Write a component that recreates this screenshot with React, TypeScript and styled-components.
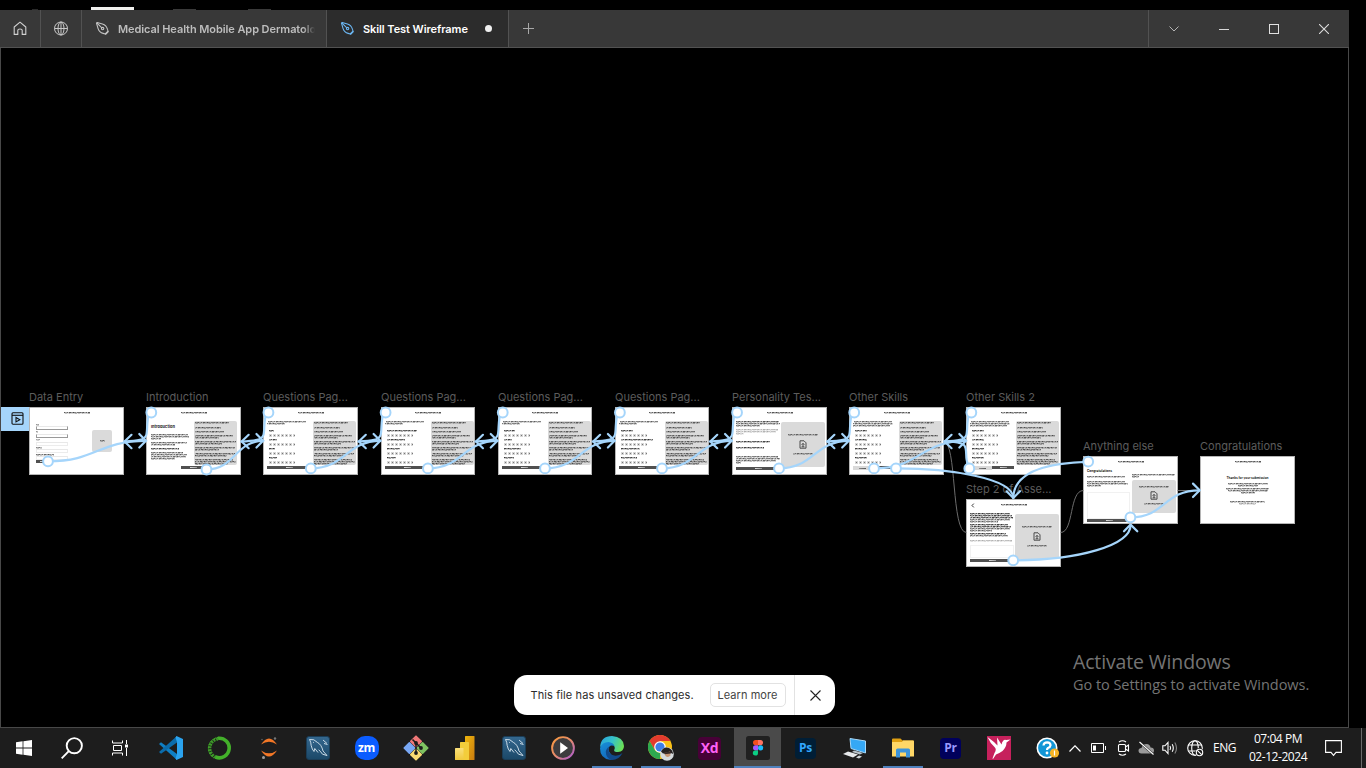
import React from "react";
import styled, { createGlobalStyle, css } from "styled-components";

const BLUE = "#a5d5fb";

const Global = createGlobalStyle`
  * { box-sizing: border-box; }
  html, body { margin: 0; background: #000; overflow: hidden; }
  body { font-family: Inter, "Liberation Sans", sans-serif; }
  svg { display: block; }
`;

const Screen = styled.div`
  width: 1366px;
  height: 768px;
  display: flex;
  flex-direction: column;
  background: #000;
`;

/* ---------- strip of the window behind ---------- */
const BackStrip = styled.div`
  height: 10px;
  flex: none;
  display: flex;
  align-items: flex-end;
`;
const Peek = styled.div<{ $gap: number; $w: number; $h: number; $c: string }>`
  margin-left: ${(p) => p.$gap}px;
  width: ${(p) => p.$w}px;
  height: ${(p) => p.$h}px;
  background: ${(p) => p.$c};
`;

/* ---------- app window ---------- */
const Window = styled.div`
  width: 1349px;
  height: 718px;
  flex: none;
  display: flex;
  flex-direction: column;
`;
const TabBar = styled.div`
  height: 38px;
  flex: none;
  display: flex;
  background: #383838;
  border-bottom: 1px solid #525252;
`;
const IconCell = styled.div<{ $w: number; $line?: boolean }>`
  width: ${(p) => p.$w}px;
  display: flex;
  align-items: center;
  justify-content: center;
  ${(p) => p.$line && css`border-right: 1px solid #525252;`}
`;
const Tab = styled.div<{ $w: number; $active?: boolean }>`
  width: ${(p) => p.$w}px;
  display: flex;
  align-items: center;
  padding-left: 13px;
  border-right: 1px solid #525252;
  background: ${(p) => (p.$active ? "#2c2c2c" : "#383838")};
  color: ${(p) => (p.$active ? "#fff" : "#bdbdbd")};
`;
const TabTitle = styled.div<{ $w: number; $fade?: boolean }>`
  margin-left: 8px;
  width: ${(p) => p.$w}px;
  overflow: hidden;
  white-space: nowrap;
  font-size: 11px;
  line-height: 16px;
  font-weight: 600;
  letter-spacing: -0.08px;
  ${(p) => p.$fade && css`mask-image: linear-gradient(90deg, #000 94%, transparent);`}
`;
const Dirty = styled.div`
  width: 7px;
  height: 7px;
  margin-left: 15.5px;
  border-radius: 50%;
  background: #f0f0f0;
`;
const Controls = styled.div`
  margin-left: auto;
  display: flex;
  border-left: 1px solid #525252;
`;
const Canvas = styled.div`
  position: relative;
  flex: 1;
  border: 1px solid #484848;
  border-top: 0;
  display: flex;
  align-items: flex-end;
  justify-content: center;
`;

/* ---------- frames on the canvas ---------- */
const FrameNode = styled.div<{ $x: number; $y: number; $w: number }>`
  position: absolute;
  left: ${(p) => p.$x - 1}px;
  top: ${(p) => p.$y - 48}px;
  width: ${(p) => p.$w}px;
`;
const FrameLabel = styled.div`
  position: absolute;
  left: 0;
  bottom: 100%;
  height: 18px;
  line-height: 16px;
  font-size: 11px;
  letter-spacing: 0;
  color: #5c5c5c;
  white-space: nowrap;
`;
const Page = styled.div`
  height: 68px;
  background: #fff;
  border: 1px solid #b5b5b5;
  display: flex;
  flex-direction: column;
  overflow: hidden;
`;
const PageHead = styled.div`
  position: relative;
  height: 13px;
  flex: none;
  padding-top: 4px;
  display: flex;
  justify-content: center;
`;
const BackArrow = styled.svg`
  position: absolute;
  left: 4px;
  top: 3px;
`;
const PageBody = styled.div`
  flex: 1;
  display: flex;
`;
const Column = styled.div<{ $w: number; $pl?: number; $center?: boolean }>`
  width: ${(p) => p.$w}px;
  padding-left: ${(p) => p.$pl ?? 0}px;
  display: flex;
  flex-direction: column;
  align-items: ${(p) => (p.$center ? "center" : "flex-start")};
`;
const Greek = styled.div<{ $w: number; $mt?: number; $ml?: number; $tone?: number; $shift?: number }>`
  flex: none;
  width: ${(p) => p.$w}px;
  height: 2px;
  margin-top: ${(p) => p.$mt ?? 0}px;
  margin-left: ${(p) => p.$ml ?? 0}px;
  opacity: ${(p) => p.$tone ?? 0.8};
  background:
    repeating-linear-gradient(90deg, #555 0 1px, #888 1px 2px, #666 2px 3px, #444 3px 4px, #999 4px 6px, #555 6px 7px, rgba(0,0,0,.25) 7px 8px, #444 8px 10px, #888 10px 12px, #333 12px 13px, #777 13px 15px, rgba(0,0,0,.3) 15px 16px, #666 16px 19px)
      ${(p) => -(p.$shift ?? 0)}px 0 / 200px 1px no-repeat,
    repeating-linear-gradient(90deg, rgba(0,0,0,.2) 0 1px, rgba(0,0,0,.34) 1px 3px, rgba(0,0,0,.08) 3px 4px, rgba(0,0,0,.26) 4px 6px, rgba(0,0,0,.12) 6px 8px, rgba(0,0,0,.3) 8px 9px, rgba(0,0,0,.18) 9px 13px)
      ${(p) => -(p.$shift ?? 0)}px 1px / 200px 1px no-repeat;
`;
const Panel = styled.div<{ $w: number; $h: number; $mt?: number; $center?: boolean }>`
  width: ${(p) => p.$w}px;
  height: ${(p) => p.$h}px;
  margin-top: ${(p) => p.$mt ?? 0}px;
  padding-left: ${(p) => (p.$center ? 0 : 1)}px;
  border-radius: 2px;
  background: #dadada;
  display: flex;
  flex-direction: column;
  align-items: ${(p) => (p.$center ? "center" : "flex-start")};
`;
const Chips = styled.div`
  flex: none;
  height: 3px;
  width: 26px;
  margin: 2px 0 1px 2px;
  background:
    repeating-linear-gradient(90deg, transparent 0 1px, #777 1px 2px, transparent 2px 4px) 0 1px / 100% 1px no-repeat,
    repeating-linear-gradient(90deg, #d6d6d6 0 3px, #fff 3px 4px);
`;
const Bar = styled.div<{ $w: number; $light?: boolean; $ml?: number }>`
  flex: none;
  width: ${(p) => p.$w}px;
  height: ${(p) => (p.$light ? 4 : 3)}px;
  margin-left: ${(p) => p.$ml ?? 0}px;
  background:
    linear-gradient(90deg, ${(p) => (p.$light ? "#888, #555" : "#ddd, #999")}) center / 7px 1px no-repeat,
    ${(p) => (p.$light ? "#d9d9d9" : "#505050")};
`;
const PageFoot = styled.div<{ $pl: number }>`
  height: 8px;
  flex: none;
  display: flex;
  padding-left: ${(p) => p.$pl}px;
`;
const Gap = styled.div<{ $h: number }>`
  flex: none;
  height: ${(p) => p.$h}px;
`;
const MiniTitle = styled.div<{ $size: number; $up?: number }>`
  flex: none;
  font-size: ${(p) => p.$size}px;
  line-height: 6px;
  height: 6px;
  margin-top: ${(p) => -(p.$up ?? 0)}px;
  font-weight: 700;
  color: #222;
  white-space: nowrap;
`;
const Field = styled.div<{ $c: string; $mt: number }>`
  flex: none;
  width: 32px;
  height: 4px;
  margin-top: ${(p) => p.$mt}px;
  border: 1px solid ${(p) => p.$c};
  border-top-color: #e8e8e8;
`;
const Area = styled.div<{ $w: number; $h: number; $mt: number }>`
  flex: none;
  width: ${(p) => p.$w}px;
  height: ${(p) => p.$h}px;
  margin-top: ${(p) => p.$mt}px;
  border: 1px solid #f1f1f1;
`;
const StartBadge = styled.div`
  position: absolute;
  left: 0;
  top: 359px;
  width: 28px;
  height: 24px;
  padding-left: 4px;
  padding-bottom: 1px;
  background: ${BLUE};
  display: flex;
  align-items: center;
  justify-content: center;
`;
const Wires = styled.svg`
  position: absolute;
  left: -1px;
  top: 0;
`;

/* ---------- toast ---------- */
const Toast = styled.div`
  position: relative;
  width: 321px;
  height: 40px;
  margin: 0 1px 12px 0;
  border-radius: 13px;
  background: #fff;
  display: flex;
  align-items: center;
  padding-left: 17px;
  font-size: 11px;
  color: #2b2b2b;
`;
const ToastText = styled.div`
  width: 179px;
  letter-spacing: 0.1px;
  white-space: nowrap;
`;
const ToastButton = styled.div`
  width: 76px;
  height: 24px;
  border: 1px solid #e2e2e2;
  border-radius: 5px;
  display: flex;
  align-items: center;
  justify-content: center;
  letter-spacing: 0.05px;
  color: #444;
  white-space: nowrap;
`;
const ToastClose = styled.div`
  margin-left: 8px;
  width: 41px;
  height: 40px;
  padding-left: 1px;
  border-left: 1px solid #e2e2e2;
  display: flex;
  align-items: center;
  justify-content: center;
`;

/* ---------- watermark ---------- */
const Watermark = styled.div`
  position: absolute;
  left: 1072px;
  top: 600px;
  color: #747474;
  font-family: "Open Sans", "Noto Sans", sans-serif;
  white-space: nowrap;
`;
const MarkTitle = styled.div`
  font-size: 19.5px;
  line-height: 27px;
  letter-spacing: -0.15px;
`;
const MarkText = styled.div`
  font-size: 14.5px;
  line-height: 20px;
  letter-spacing: -0.04px;
`;

/* ---------- taskbar ---------- */
const Taskbar = styled.div`
  height: 40px;
  flex: none;
  display: flex;
  background: #1d1d1d;
  color: #fff;
`;
const SystemButton = styled.div`
  width: 48px;
  display: flex;
  align-items: center;
  justify-content: center;
`;
const Apps = styled.div`
  width: 875px;
  margin-left: 3px;
  display: flex;
`;
const AppButton = styled.div<{ $open?: boolean; $active?: boolean }>`
  flex: none;
  width: 47px;
  margin-right: 2px;
  &:nth-child(n + 12) {
    margin-right: 1px;
  }
  &:nth-child(14) {
    margin-right: 2px;
  }
  display: flex;
  align-items: center;
  justify-content: center;
  background:
    ${(p) => (p.$open || p.$active ? "linear-gradient(#4f81bd, #4f81bd)" : "none")} center bottom /
      ${(p) => (p.$active ? "100%" : "40px")} 2px no-repeat,
    ${(p) => (p.$active ? "#4a4a4a" : "transparent")};
`;
const Tile = styled.div<{ $bg: string; $c: string; $s: number; $r?: string; $f?: number }>`
  width: ${(p) => p.$s}px;
  height: ${(p) => p.$s}px;
  border-radius: ${(p) => p.$r ?? "4px"};
  background: ${(p) => p.$bg};
  color: ${(p) => p.$c};
  display: flex;
  align-items: center;
  justify-content: center;
  font: 700 ${(p) => p.$f ?? 12}px/1 "Open Sans", sans-serif;
  letter-spacing: -0.3px;
`;
const Tray = styled.div`
  margin-left: 11px;
  display: flex;
  align-items: center;
  font: 12px/18px "Open Sans", "Noto Sans", sans-serif;
`;
const TrayItem = styled.div<{ $w: number }>`
  width: ${(p) => p.$w}px;
  display: flex;
  justify-content: center;
  align-items: center;
  letter-spacing: -0.4px;
`;
const Clock = styled.div`
  width: 74px;
  padding-bottom: 1px;
  text-align: center;
  letter-spacing: -0.45px;
  white-space: nowrap;
`;
const DesktopEdge = styled.div`
  margin-left: auto;
  width: 5px;
  border-left: 1px solid #6a6a6a;
`;

/* ---------- icons ---------- */
const Pen = ({ color }: { color: string }) => (
  <svg width="15" height="15" viewBox="0 0 15 15" fill="none" stroke={color} strokeWidth="1.1" strokeLinejoin="round">
    <path d="M1.5 2.2 L3 7.4 Q4.2 11.4 8.2 12.4 L10.2 13 L13 10.2 L12.4 8.2 Q11.4 4.2 7.4 3 L2.2 1.5 Z" />
    <path d="M1.8 1.8 L6.8 6.8 M10.4 13.6 L13.6 10.4" />
    <circle cx="7.6" cy="7.6" r="1.2" />
  </svg>
);
const Home = () => (
  <svg width="14" height="15" viewBox="0 0 14 15" fill="none" stroke="#d0d0d0" strokeWidth="1.1" strokeLinejoin="round">
    <path d="M1.2 6 L7 1.2 L12.8 6 V13.4 H9.2 V9.2 Q9.2 8 7 8 Q4.8 8 4.8 9.2 V13.4 H1.2 Z" />
  </svg>
);
const Globe = () => (
  <svg width="15" height="15" viewBox="0 0 15 15" fill="none" stroke="#c8c8c8">
    <circle cx="7" cy="7.5" r="6.5" />
    <ellipse cx="7" cy="7.5" rx="3" ry="6.5" />
    <path d="M.5 7.5 H13.5 M7 1 V14" />
  </svg>
);
const FileGlyph = () => (
  <svg width="8" height="9" viewBox="0 0 8 9" fill="none" stroke="#3c3c3c" strokeWidth="0.9">
    <path d="M1 .8 H5 L7 2.8 V8.2 H1 Z M4 3.4 V6.6 M2.6 4.8 L4 3.4 L5.4 4.8 M2.6 6.8 H5.4" />
  </svg>
);
const Dolphin = () => (
  <svg width="24" height="24" viewBox="0 0 24 24">
    <defs>
      <linearGradient id="sea" x1="0" y1="0" x2="0" y2="1">
        <stop offset="0" stopColor="#35688f" />
        <stop offset="1" stopColor="#1b4868" />
      </linearGradient>
    </defs>
    <rect x=".5" y=".5" width="23" height="23" rx="2.5" fill="url(#sea)" stroke="#1a3d57" />
    <path
      d="M3.5 3.5 Q8 2.5 11.5 6.5 Q15.5 8.5 17 15 L21 19.5 L16.5 18.2 Q14 14.5 12.6 13.8 M3.5 3.5 Q5 6 5.2 9.5 Q6 13.5 8 15.5 L8.8 12.5 L12 16.5 M7.2 6.2 l.8.6 M17 4 L21 7.5 M18 7.5 L21.5 8.5"
      fill="none"
      stroke="#dbe8f0"
      strokeWidth=".9"
    />
  </svg>
);

/* ---------- page miniatures ---------- */
const panelLines = [
  [34, 1], [26, 3], [29, 2], [38, 2], [24, 0], [41, 2], [27, 0], [40, 2], [24, 0], [40, 2], [32, 0], [38, 2], [41, 0], [33, 0],
];
const InfoPanel = () => (
  <Panel $w={43} $h={44}>
    {panelLines.map(([w, mt], i) => (
      <Greek key={i} $w={w} $mt={mt} $shift={i * 5} $tone={0.85} />
    ))}
  </Panel>
);
const Head = ({ back }: { back?: boolean }) => (
  <PageHead>
    {back && (
      <BackArrow width="4" height="5" fill="none" stroke="#222" strokeWidth="0.9">
        <path d="M2.8 .6 L1 2.5 L2.8 4.4" />
      </BackArrow>
    )}
    <Greek $w={26} $shift={3} $tone={0.9} />
  </PageHead>
);
const UploadPanel = ({ h, mt = 0, w = 44 }: { h: number; mt?: number; w?: number }) => (
  <Panel $w={w} $h={h} $mt={mt} $center>
    <Greek $w={30} $mt={h > 40 ? 12 : 6} />
    <Gap $h={h > 40 ? 4 : 3} />
    <FileGlyph />
    <Greek $w={20} $mt={h > 40 ? 4 : 3} $shift={4} />
  </Panel>
);
const Questions = ({ labels, split }: { labels: number[]; split?: number }) => (
  <Page>
    <Head />
    <PageBody>
      <Column $w={49} $pl={3}>
        <Greek $w={38} $ml={1} $tone={0.8} />
        <Greek $w={split ? 40 : 18} $shift={6} $tone={0.8} />
        {split ? <Greek $w={37} $shift={2} $tone={0.8} /> : <Gap $h={2} />}
        {labels.map((w, i) => (
          <React.Fragment key={i}>
            <Greek $w={w} $ml={2} $mt={i ? 1 : 3} $shift={i * 4} $tone={1} />
            <Chips />
          </React.Fragment>
        ))}
      </Column>
      <InfoPanel />
    </PageBody>
    <PageFoot $pl={split ?? 3}>
      {split ? (
        <>
          <Bar $w={19} $light />
          <Bar $w={22} $ml={split > 4 ? 0 : 6} />
        </>
      ) : (
        <Bar $w={44} />
      )}
    </PageFoot>
  </Page>
);
const DataEntry = () => (
  <Page>
    <Head />
    <PageBody>
      <Column $w={62} $pl={6}>
        <Greek $w={3} $mt={3} $tone={0.6} />
        <Field $c="#999" $mt={0} />
        <Greek $w={2} $mt={1} $tone={0.6} />
        <Field $c="#999" $mt={1} />
        <Greek $w={4} $mt={1} $tone={0.5} />
        <Field $c="#ececec" $mt={1} />
        <Greek $w={6} $mt={1} $tone={0.7} />
        <Field $c="#ececec" $mt={0} />
        <Greek $w={18} $mt={1} $tone={0.8} />
        <Field $c="#eee" $mt={0} />
        <Bar $w={14} />
      </Column>
      <Panel $w={20} $h={22} $mt={9} $center>
        <Greek $w={5} $mt={10} />
      </Panel>
    </PageBody>
  </Page>
);
const Introduction = () => (
  <Page>
    <Head />
    <PageBody>
      <Column $w={47} $pl={4}>
        <Gap $h={3} />
        <MiniTitle $size={4}>Introduction</MiniTitle>
        <Greek $w={37} $mt={4} />
        <Greek $w={38} $shift={3} />
        <Greek $w={10} />
        <Greek $w={36} $mt={2} />
        <Greek $w={24} $shift={5} />
        <Greek $w={28} $mt={2} $tone={1} />
        <Greek $w={32} $mt={2} />
        <Greek $w={36} $shift={2} />
        <Greek $w={35} $shift={5} />
        <Greek $w={24} />
      </Column>
      <InfoPanel />
    </PageBody>
    <PageFoot $pl={34}>
      <Bar $w={25} />
    </PageFoot>
  </Page>
);
const Personality = () => (
  <Page>
    <Head />
    <PageBody>
      <Column $w={48} $pl={3}>
        <Greek $w={43} $tone={0.9} />
        <Greek $w={44} $shift={3} />
        <Greek $w={24} />
        <Greek $w={42} $mt={2} $tone={0.4} />
        <Greek $w={40} $tone={0.4} />
        <Greek $w={8} $tone={0.4} />
        <Greek $w={34} $mt={6} $tone={1} />
        <Greek $w={28} $mt={4} $tone={1} />
        <Greek $w={42} $mt={7} />
        <Greek $w={44} $shift={5} />
        <Greek $w={40} />
        <Greek $w={5} />
      </Column>
      <UploadPanel h={45} mt={1} />
    </PageBody>
    <PageFoot $pl={3}>
      <Bar $w={44} />
    </PageFoot>
  </Page>
);
const StepTwo = () => (
  <Page>
    <Head back />
    <PageBody>
      <Column $w={48} $pl={3}>
        <Greek $w={40} $tone={1} />
        <Greek $w={42} $shift={3} $tone={1} />
        <Greek $w={43} $shift={5} $tone={1} />
        <Greek $w={40} />
        <Greek $w={28} />
        <Greek $w={38} $mt={1} $tone={1} />
        <Greek $w={41} $shift={4} $tone={1} />
        <Greek $w={40} />
        <Greek $w={22} />
        <Greek $w={36} $mt={1} $tone={1} />
        <Greek $w={38} $shift={2} />
        <Greek $w={42} $mt={3} $tone={0.4} />
        <Area $w={44} $h={13} $mt={3} />
      </Column>
      <UploadPanel h={45} mt={1} />
    </PageBody>
    <PageFoot $pl={3}>
      <Bar $w={44} />
    </PageFoot>
  </Page>
);
const Anything = () => (
  <Page>
    <Head />
    <PageBody>
      <Column $w={48} $pl={3}>
        <MiniTitle $size={3.2} $up={2}>Congratulations</MiniTitle>
        <Greek $w={38} $mt={2} />
        <Greek $w={38} $mt={3} />
        <Greek $w={41} $shift={3} />
        <Greek $w={14} />
        <Area $w={43} $h={27} $mt={5} />
      </Column>
      <Column $w={44}>
        <Greek $w={43} $mt={4} />
        <Greek $w={7} />
        <UploadPanel h={33} mt={2} />
      </Column>
    </PageBody>
    <PageFoot $pl={3}>
      <Bar $w={44} />
    </PageFoot>
  </Page>
);
const Thanks = () => (
  <Page>
    <Head />
    <PageBody>
      <Column $w={93} $center>
        <Gap $h={5} />
        <MiniTitle $size={3.1}>Thanks for your submission</MiniTitle>
        <Greek $w={40} $mt={2} />
        <Greek $w={20} />
        <Greek $w={43} $mt={1} />
        <Greek $w={40} $shift={3} />
        <Greek $w={14} />
        <Greek $w={35} $mt={7} />
        <Greek $w={17} $tone={0.5} />
      </Column>
    </PageBody>
  </Page>
);

const frames = [
  { x: 29, y: 407, w: 95, name: "Data Entry", page: <DataEntry /> },
  { x: 146, y: 407, w: 95, name: "Introduction", page: <Introduction /> },
  { x: 263, y: 407, w: 95, name: "Questions Pag...", page: <Questions labels={[5, 8, 6, 8]} /> },
  { x: 381, y: 407, w: 94, name: "Questions Pag...", page: <Questions labels={[30, 18, 13, 9]} /> },
  { x: 498, y: 407, w: 94, name: "Questions Pag...", page: <Questions labels={[11, 8, 17, 10]} /> },
  { x: 615, y: 407, w: 94, name: "Questions Pag...", page: <Questions labels={[12, 32, 19, 16]} /> },
  { x: 732, y: 407, w: 95, name: "Personality Tes...", page: <Personality /> },
  { x: 849, y: 407, w: 95, name: "Other Skills", page: <Questions labels={[12, 12, 12, 12]} split={3} /> },
  { x: 966, y: 407, w: 95, name: "Other Skills 2", page: <Questions labels={[12, 12, 12, 12]} split={6} /> },
  { x: 966, y: 499, w: 95, name: "Step 2 of Asse...", page: <StepTwo /> },
  { x: 1083, y: 456, w: 95, name: "Anything else", page: <Anything /> },
  { x: 1200, y: 456, w: 95, name: "Congratulations", page: <Thanks /> },
];

const step = 117.15;
const starts = [48, 206.5, 310.8, 427.9, 545, 662, 779, 874];

const Connections = () => (
  <Wires width="1349" height="679" viewBox="0 48 1349 679" fill="none" strokeLinecap="round" strokeLinejoin="round">
    <g stroke="#6c6c6c" strokeWidth="1">
      <path d="M944 441.5 C957 441.5 951 532.5 966 532.5 M1061 532.5 C1074 532.5 1069 490.5 1083 490.5 M1178 490.5 H1194" />
    </g>
    <g stroke={BLUE} strokeWidth="2.2">
      {starts.map((x, i) => {
        const y = i === 0 ? 461.3 : i === 1 ? 469.5 : 468.4;
        const end = 146.3 + step * i;
        const left = 124 + step * i;
        const mid = (x + end) / 2;
        return (
          <g key={x}>
            <path d={`M${x} ${y} C${mid} ${y} ${mid} 441 ${end} 440.8`} />
            <path d={`M${end - 7} 434 L${end - 0.3} 440.8 L${end - 7} 447.5`} />
            <path d={`M${end + 3} 414 C${end} 420 ${end + 1.5} 430 ${end} 435 C${end - 1.5} 439.8 ${end - 8} 441 ${left} 441.5`} />
            <path d={`M${left + 7.5} 434.8 L${left + 0.5} 441.5 L${left + 7.5} 448.2`} />
          </g>
        );
      })}
      <path d="M968 464 C964.5 458 968 449 964 445 C960 441.5 952 441.5 944.5 441.3" />
      <path d="M896 468.4 C950 468.4 1013 478 1013.3 498" />
      <path d="M1088 461.8 C1042 463 1013.5 474 1013.3 498" />
      <path d="M1006.6 491.3 L1013.3 498 L1020 491.3" />
      <path d="M1013 560.3 C1080 560.3 1130.5 545 1130.6 525" />
      <path d="M1124 531.3 L1130.6 524.6 L1137.3 531.3" />
      <path d="M1130.6 517.3 C1165 517.3 1164 490.3 1199.5 490.3" />
      <path d="M1193 483.6 L1199.7 490.3 L1193 497" />
    </g>
    <g stroke={BLUE} strokeWidth="2" fill="#fff">
      {starts.map((x, i) => (
        <g key={x}>
          <circle cx={x} cy={i === 0 ? 461.3 : i === 1 ? 469.5 : 468.4} r="4.9" />
          <circle cx={151.3 + step * i} cy="412.5" r="4.9" />
        </g>
      ))}
      <circle cx="896" cy="468.4" r="4.9" />
      <circle cx="969.3" cy="468.4" r="4.9" />
      <circle cx="1088.2" cy="461.6" r="4.9" />
      <circle cx="1013.2" cy="560.3" r="4.9" />
      <circle cx="1130.4" cy="517.3" r="4.9" />
    </g>
  </Wires>
);

const Code = () => (
  <svg width="24" height="24" viewBox="0 0 24 24">
    <path d="M0 8 L2 6.3 L18 18 V24 Z" fill="#0f7fc4" />
    <path d="M0 16 L2 17.8 L18 6.4 V0 Z" fill="#0b6cab" />
    <path d="M17.5 0 L24 3 V21 L17.5 24 L16.5 22.5 L18 18 V6 L16.5 1.5 Z" fill="#2ba3ee" />
  </svg>
);
const Anaconda = () => (
  <svg width="25" height="24" viewBox="0 0 25 24" fill="none" stroke="#43b02a">
    <path d="M11 2.3 A9.8 9.8 0 1 1 8.5 21" strokeWidth="3.6" />
    <path d="M11 2.8 A9.6 9.6 0 0 0 9 21.3" strokeWidth="3.2" strokeDasharray="2 .9" opacity=".85" />
    <path d="M12 1.4 A11 11 0 0 0 7 22" strokeWidth="1" strokeDasharray="2 1" />
  </svg>
);
const Jupyter = () => (
  <svg width="20" height="24" viewBox="0 0 20 24">
    <path d="M2 8.5 Q10 -3.5 18 8.5 Q10 2.8 2 8.5 Z M2 14.5 Q10 26.5 18 14.5 Q10 20.2 2 14.5 Z" fill="#f37726" />
    <circle cx="16" cy="2.5" r="1.2" fill="#767677" />
    <circle cx="4.5" cy="21.5" r="1.5" fill="#9e9e9e" />
    <circle cx="3" cy="3.5" r=".8" fill="#616262" />
  </svg>
);
const Git = () => (
  <svg width="26" height="26" viewBox="0 0 26 26">
    <path d="M13 1.2 L18.2 6.4 L13 11.6 L7.8 6.4 Z" fill="#f07878" stroke="#f07878" strokeWidth="1.6" strokeLinejoin="round" />
    <path d="M6.4 7.8 L11.6 13 L6.4 18.2 L1.2 13 Z" fill="#79a8f5" stroke="#79a8f5" strokeWidth="1.6" strokeLinejoin="round" />
    <path d="M19.6 7.8 L24.8 13 L19.6 18.2 L14.4 13 Z" fill="#80c362" stroke="#80c362" strokeWidth="1.6" strokeLinejoin="round" />
    <path d="M13 14.4 L18.2 19.6 L13 24.8 L7.8 19.6 Z" fill="#fbdc73" stroke="#fbdc73" strokeWidth="1.6" strokeLinejoin="round" />
    <path d="M9.5 4.5 L18 13 M13 8 V18" stroke="#1c1c1c" strokeWidth="1.5" />
    <g fill="#1c1c1c"><circle cx="13" cy="8" r="1.9" /><circle cx="18" cy="13" r="1.9" /><circle cx="13" cy="18" r="1.9" /></g>
  </svg>
);
const PowerBi = () => (
  <svg width="20" height="24" viewBox="0 0 20 24">
    <defs>
      <linearGradient id="gold" x1="0" y1="0" x2="1" y2="1"><stop stopColor="#efb60c" /><stop offset="1" stopColor="#c87b10" /></linearGradient>
      <linearGradient id="lemon" x1="0" y1="0" x2="0" y2="1"><stop stopColor="#fae07c" /><stop offset="1" stopColor="#f0c83c" /></linearGradient>
    </defs>
    <rect x="10" width="9.5" height="24" rx=".6" fill="url(#gold)" />
    <rect x="5" y="6" width="9" height="18" rx=".6" fill="#f3cd3b" />
    <rect x="0" y="12" width="8.5" height="12" rx=".6" fill="url(#lemon)" />
  </svg>
);
const Player = () => (
  <svg width="24" height="24" viewBox="0 0 24 24">
    <defs><linearGradient id="ring" x1="0" y1="0" x2="1" y2="1"><stop stopColor="#fa9a3c" /><stop offset=".5" stopColor="#e58b6c" /><stop offset="1" stopColor="#a858d8" /></linearGradient></defs>
    <circle cx="12" cy="12" r="10.9" fill="#3c3c3e" stroke="url(#ring)" strokeWidth="1.9" />
    <path d="M9.2 6.3 L17 12 L9.2 17.7 Z" fill="#fff" />
  </svg>
);
const Edge = () => (
  <svg width="24" height="24" viewBox="0 0 24 24">
    <defs>
      <linearGradient id="wave" x1="0" y1=".2" x2="1" y2=".5"><stop stopColor="#2aa5dc" /><stop offset=".5" stopColor="#36c2ca" /><stop offset="1" stopColor="#6be055" /></linearGradient>
      <linearGradient id="deep" x1="0" y1="0" x2=".6" y2="1"><stop stopColor="#1791d8" /><stop offset="1" stopColor="#1465bb" /></linearGradient>
    </defs>
    <path d="M0 11 Q1 0 12 0 Q23.5 1 24 10 Q24 15.5 18 16 Q13.5 16 14.2 14 Q15.5 12 14 9.5 Q10 4 0 11 Z" fill="url(#wave)" />
    <path d="M0 12 Q2 6 8.5 6 Q13 6.5 14.5 10 Q9 8 8.5 13.5 Q9.5 20 17 20.5 Q14 24 10 23.8 Q0 22.5 0 12 Z" fill="url(#deep)" />
    <path d="M8.5 12 Q8 17.5 13 19.3 Q18 20.8 22.5 17 Q19 24 12 24 Q6 22.5 5.8 16 Q6 12.5 9.5 10.5 Z" fill="#114a8b" />
  </svg>
);
const Chrome = () => (
  <svg width="26" height="26" viewBox="0 0 26 26">
    <circle cx="12" cy="12" r="12" fill="#fbc116" />
    <path d="M1.6 6 A12 12 0 0 1 22.4 6 H12 L6.8 15 Z" fill="#e33b2e" />
    <path d="M1.6 6 L6.8 15 Q9 18 12.5 18 L12 24 A12 12 0 0 1 1.6 6 Z" fill="#2da94f" />
    <circle cx="12" cy="12" r="5.8" fill="#fff" />
    <circle cx="12" cy="12" r="4.6" fill="#3f7ee8" />
    <circle cx="19" cy="19" r="6.8" fill="#d5dadd" />
    <path d="M13 16.5 Q16 11 21 13 Q25 15 25 19 L22 17.5 L15 18.5 Z" fill="#25201f" />
    <path d="M16.5 18 L22 16.5 L22.5 20.5 Q20 23 17.5 21 Z" fill="#c69674" />
    <path d="M16 17.5 L23 16.5 L23 18.5 L16.5 19.3 Z" fill="#3a2b29" />
  </svg>
);
const FigmaTile = () => (
  <svg width="24" height="24" viewBox="0 0 24 24">
    <rect width="24" height="24" rx="2.5" fill="#202020" />
    <path d="M12 4 H9.6 a2.6 2.6 0 0 0 0 5.2 H12 Z" fill="#f24e1e" />
    <path d="M12 4 h2.4 a2.6 2.6 0 0 1 0 5.2 H12 Z" fill="#ff7262" />
    <path d="M12 9.2 H9.6 a2.6 2.6 0 0 0 0 5.2 H12 Z" fill="#a259ff" />
    <circle cx="14.6" cy="11.8" r="2.6" fill="#1abcfe" />
    <path d="M12 14.4 H9.6 a2.6 2.6 0 1 0 2.4 2.6 Z" fill="#0acf83" />
  </svg>
);
const Computer = () => (
  <svg width="24" height="24" viewBox="0 0 24 24">
    <path d="M7 2.5 L22.5 5 V17 L8 12.5 Z" fill="#35a8f5" stroke="#a7d7f7" strokeWidth="1" />
    <path d="M11 14.5 L20 17 L17 18.5 L9 16 Z" fill="#b9c3ca" />
    <path d="M0 18 L5 15.5 L15 18.5 L10 21.5 Z" fill="#e6e9eb" />
    <path d="M13 21.5 L16 19.5 L19 20.5 L16 22.5 Z" fill="#cfd5d9" />
  </svg>
);
const Explorer = () => (
  <svg width="22" height="20" viewBox="0 0 22 20">
    <path d="M0 1.5 Q0 .5 1 .5 H8.5 L10.5 2.5 H21 Q22 2.5 22 3.5 V8 H0 Z" fill="#e0a012" />
    <path d="M0 4 H10 L11 2.5 H21 Q22 2.5 22 3.5 V18.5 H0 Z" fill="#ffd767" />
    <path d="M4 19.5 V12 Q4 10.5 5.5 10.5 H16.5 Q18 10.5 18 12 V19.5 H14 V14.5 H8 V19.5 Z" fill="#3d94da" />
  </svg>
);
const Bird = () => (
  <svg width="24" height="24" viewBox="0 0 24 24">
    <rect width="24" height="24" fill="#c6215c" />
    <path d="M0.5 1 L7 6 L10.5 9.5 L10 1.5 L14.5 8.5 Q16 3 19 4 L23.5 3.6 L19.5 6.5 Q19.5 11 15.5 15 Q12 17.5 9 18.5 L6 23 L5.5 22.5 L7.5 17 Q10 13 7.5 11 Q3 7 0.5 1 Z" fill="#fff" />
  </svg>
);

const apps: { icon: React.ReactNode; open?: boolean; active?: boolean }[] = [
  { icon: <Code /> },
  { icon: <Anaconda /> },
  { icon: <Jupyter /> },
  { icon: <Dolphin /> },
  { icon: <Tile $bg="#0b5cff" $c="#fff" $s={24} $r="10px" $f={12}>zm</Tile> },
  { icon: <Git /> },
  { icon: <PowerBi /> },
  { icon: <Dolphin /> },
  { icon: <Player /> },
  { icon: <Edge />, open: true },
  { icon: <Chrome />, open: true },
  { icon: <Tile $bg="#470137" $c="#ff61f6" $s={23} $f={14}>Xd</Tile> },
  { icon: <FigmaTile />, active: true },
  { icon: <Tile $bg="#001e36" $c="#31a8ff" $s={21}>Ps</Tile> },
  { icon: <Computer /> },
  { icon: <Explorer />, open: true },
  { icon: <Tile $bg="#00005b" $c="#9999ff" $s={21}>Pr</Tile> },
  { icon: <Bird /> },
];

export default function App() {
  return (
    <Screen>
      <Global />
      <BackStrip>
        <Peek $gap={32} $w={6} $h={1} $c="#2a2a2a" />
        <Peek $gap={53} $w={43} $h={3} $c="#f0f0ee" />
        <Peek $gap={39} $w={23} $h={1} $c="#3a3a3a" />
        <Peek $gap={52} $w={23} $h={1} $c="#3a3a3a" />
      </BackStrip>
      <Window>
        <TabBar>
          <IconCell $w={41} $line><Home /></IconCell>
          <IconCell $w={41} $line><Globe /></IconCell>
          <Tab $w={245}>
            <Pen color="#c4c4c4" />
            <TabTitle $w={197} $fade>Medical Health Mobile App Dermatology</TabTitle>
          </Tab>
          <Tab $w={182} $active>
            <Pen color="#6cb8f5" />
            <TabTitle $w={106}>Skill Test Wireframe</TabTitle>
            <Dirty />
          </Tab>
          <IconCell $w={38}>
            <svg width="11" height="11" stroke="#a8a8a8"><path d="M5.5 0 V11 M0 5.5 H11" /></svg>
          </IconCell>
          <Controls>
            <IconCell $w={50}>
              <svg width="10" height="6" fill="none" stroke="#b4b4b4"><path d="M.5 .5 L5 5 L9.5 .5" /></svg>
            </IconCell>
            <IconCell $w={50}>
              <svg width="10" height="2" stroke="#d8d8d8"><path d="M0 1.5 H10" /></svg>
            </IconCell>
            <IconCell $w={50}>
              <svg width="10" height="10" fill="none" stroke="#e0e0e0"><rect x=".5" y=".5" width="9" height="9" /></svg>
            </IconCell>
            <IconCell $w={50}>
              <svg width="10" height="10" stroke="#dcdcdc" strokeWidth="1.1"><path d="M0 0 L10 10 M10 0 L0 10" /></svg>
            </IconCell>
          </Controls>
        </TabBar>
        <Canvas>
          {frames.map((f) => (
            <FrameNode key={f.x + "-" + f.y} $x={f.x} $y={f.y} $w={f.w}>
              <FrameLabel>{f.name}</FrameLabel>
              {f.page}
            </FrameNode>
          ))}
          <StartBadge>
            <svg width="13" height="13" viewBox="0 0 13 13" fill="none" stroke="#111" strokeWidth="1.1">
              <rect x="1" y=".8" width="11" height="11.4" rx="1" />
              <path d="M1 3.3 H12" />
              <path d="M5 5.5 L8.8 7.7 L5 9.9 Z" />
            </svg>
          </StartBadge>
          <Connections />
          <Watermark>
            <MarkTitle>Activate Windows</MarkTitle>
            <MarkText>Go to Settings to activate Windows.</MarkText>
          </Watermark>
          <Toast>
            <ToastText>This file has unsaved changes.</ToastText>
            <ToastButton>Learn more</ToastButton>
            <ToastClose>
              <svg width="11" height="11" stroke="#222" strokeWidth="1.1"><path d="M.5 .5 L10.5 10.5 M10.5 .5 L.5 10.5" /></svg>
            </ToastClose>
          </Toast>
        </Canvas>
      </Window>
      <Taskbar>
        <SystemButton>
          <svg width="16" height="16" viewBox="0 0 16 16" fill="#fff">
            <path d="M0 2.2 L6.6 1.3 V7.6 H0 Z M7.4 1.2 L16 0 V7.6 H7.4 Z M0 8.4 H6.6 V14.7 L0 13.8 Z M7.4 8.4 H16 V16 L7.4 14.8 Z" />
          </svg>
        </SystemButton>
        <SystemButton>
          <svg width="22" height="22" viewBox="0 0 22 22" fill="none" stroke="#fff" strokeWidth="1.9">
            <circle cx="13.3" cy="8.7" r="7.6" />
            <path d="M7.8 14.2 L.7 21.3" />
          </svg>
        </SystemButton>
        <SystemButton>
          <svg width="16" height="16" viewBox="0 0 16 16" fill="none" stroke="#fff">
            <path d="M.5 .5 V3 H10.5 V.5 M.5 15.5 V13 H10.5 V15.5 M1.5 5.5 H9.5 V10.5 H1.5 Z M14.5 0 V4 M14.5 8 V16" />
            <rect x="13.5" y="5" width="2" height="2" fill="#fff" />
          </svg>
        </SystemButton>
        <Apps>
          {apps.map((a, i) => (
            <AppButton key={i} $open={a.open} $active={a.active}>{a.icon}</AppButton>
          ))}
        </Apps>
        <Tray>
          <TrayItem $w={30}>
            <svg width="24" height="22" viewBox="0 0 24 22">
              <circle cx="11" cy="11" r="9.7" fill="#1296d6" stroke="#fff" strokeWidth="1.6" />
              <path d="M7.5 8.5 Q7.8 5.3 11.2 5.3 Q14.6 5.5 14.5 8.3 Q14.2 10.3 12 11 Q11 11.7 11 13" fill="none" stroke="#fff" strokeWidth="2.2" />
              <circle cx="11" cy="16" r="1.4" fill="#fff" />
              <circle cx="18.5" cy="16" r="4.6" fill="#f5b324" />
              <path d="M18.5 13.5 V18.5" stroke="#fff" strokeWidth="1.2" />
            </svg>
          </TrayItem>
          <TrayItem $w={23}>
            <svg width="12" height="7" fill="none" stroke="#fff" strokeWidth="1.2"><path d="M.5 6.5 L6 .8 L11.5 6.5" /></svg>
          </TrayItem>
          <TrayItem $w={25}>
            <svg width="15" height="10" fill="none" stroke="#fff">
              <path d="M.5 .5 H12.5 V9.5 H.5 Z M14.5 3 V7" />
              <rect x="2" y="2.5" width="3" height="5" fill="#fff" stroke="none" />
            </svg>
          </TrayItem>
          <TrayItem $w={24}>
            <svg width="13" height="16" fill="none" stroke="#fff" strokeWidth="1.1">
              <rect x="1.5" y="4.5" width="7" height="7" rx="1" />
              <path d="M8.5 7 L11.5 5 V11 L8.5 9 M2 2 Q5.5 -.5 9 2 M2 14 Q5.5 16.5 9 14" />
            </svg>
          </TrayItem>
          <TrayItem $w={23}>
            <svg width="17" height="14" viewBox="0 0 17 14">
              <path d="M3.5 12.5 Q.5 12.5 .5 9.5 Q.7 7 3.5 7 Q4.5 3 8.5 3 Q12 3.3 12.5 6.5 Q16 6.5 16 9.5 Q16 12.5 13 12.5 Z" fill="#9a9a9a" />
              <path d="M1.5 1 L15.5 13.5" stroke="#1d1d1d" strokeWidth="2.2" />
              <path d="M1.5 1 L15.5 13.5" stroke="#fff" strokeWidth="1.1" />
            </svg>
          </TrayItem>
          <TrayItem $w={24}>
            <svg width="16" height="14" fill="none" stroke="#fff" strokeWidth="1.1">
              <path d="M.8 4.8 H3 L6 1.5 V12.5 L3 9.2 H.8 Z M8 5 Q9.2 7 8 9 M10.2 3.2 Q12.4 7 10.2 10.8" />
              <path d="M12.8 1.5 Q16.2 7 12.8 12.5" stroke="#888" />
            </svg>
          </TrayItem>
          <TrayItem $w={26}>
            <svg width="17" height="17" fill="none" stroke="#fff" strokeWidth="1.1">
              <circle cx="8" cy="8" r="7.3" />
              <ellipse cx="8" cy="8" rx="3.3" ry="7.3" />
              <path d="M1.4 5 H14.6 M1.4 11 H9" />
              <circle cx="12.5" cy="12.5" r="4.4" fill="#1d1d1d" stroke="none" />
              <circle cx="12.5" cy="12.5" r="3.2" />
              <path d="M10.3 10.3 L14.7 14.7" />
            </svg>
          </TrayItem>
          <TrayItem $w={33}>ENG</TrayItem>
          <Clock>
            07:04 PM
            <br />
            02-12-2024
          </Clock>
          <TrayItem $w={36}>
            <svg width="17" height="17" fill="none" stroke="#fff" strokeWidth="1.1">
              <path d="M.6 .6 H16.4 V12.4 H11 L8.5 15.4 L6 12.4 H.6 Z" />
            </svg>
          </TrayItem>
        </Tray>
        <DesktopEdge />
      </Taskbar>
    </Screen>
  );
}
